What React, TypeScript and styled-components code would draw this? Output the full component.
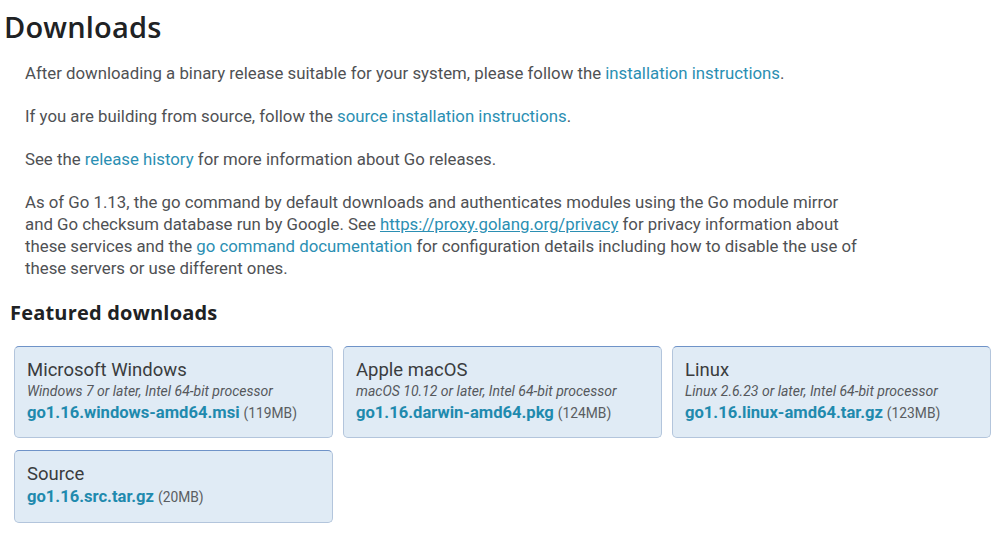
import React from 'react'
import styled, { createGlobalStyle } from 'styled-components'

const GlobalStyle = createGlobalStyle`
  body {
    margin: 0;
    background: #ffffff;
    font-family: Roboto, "Liberation Sans", Arial, sans-serif;
    color: #4a4c4f;
  }
`

type Download = {
  os: string
  info?: string
  file: string
  size: string
}

const downloads: Download[] = [
  { os: 'Microsoft Windows', info: 'Windows 7 or later, Intel 64-bit processor', file: 'go1.16.windows-amd64.msi', size: '119MB' },
  { os: 'Apple macOS', info: 'macOS 10.12 or later, Intel 64-bit processor', file: 'go1.16.darwin-amd64.pkg', size: '124MB' },
  { os: 'Linux', info: 'Linux 2.6.23 or later, Intel 64-bit processor', file: 'go1.16.linux-amd64.tar.gz', size: '123MB' },
  { os: 'Source', file: 'go1.16.src.tar.gz', size: '20MB' },
]

const App = (): JSX.Element => {
  return (
    <Page>
      <GlobalStyle />
      <Title>Downloads</Title>
      <Body>
        <Para>
          After downloading a binary release suitable for your system, please follow the{' '}
          <Link href="#">installation instructions</Link>.
        </Para>
        <Para>
          If you are building from source, follow the <Link href="#">source installation instructions</Link>.
        </Para>
        <Para>
          See the <Link href="#">release history</Link> for more information about Go releases.
        </Para>
        <Para>
          As of Go 1.13, the go command by default downloads and authenticates modules using the Go module mirror
          <br />
          and Go checksum database run by Google. See <Link href="#" $underline>https://proxy.golang.org/privacy</Link> for privacy information about
          <br />
          these services and the <Link href="#">go command documentation</Link> for configuration details including how to disable the use of
          <br />
          these servers or use different ones.
        </Para>
      </Body>
      <SubTitle>Featured downloads</SubTitle>
      <Grid>
        {downloads.map((d) => (
          <Card key={d.file} href="#" $compact={!d.info}>
            <Os>{d.os}</Os>
            {d.info && <Info>{d.info}</Info>}
            <FileRow>
              <FileName>{d.file}</FileName> <Size>({d.size})</Size>
            </FileRow>
          </Card>
        ))}
      </Grid>
    </Page>
  )
}

export default App

/* =================================================== */
const Page = styled.div`
  padding: 10px 0 0 4px;
  width: 1000px;
  box-sizing: border-box;
`

const Title = styled.h1`
  margin: 0;
  font-family: "Open Sans", Inter, sans-serif;
  font-weight: 600;
  font-size: 29px;
  line-height: 34px;
  color: #202224;
  letter-spacing: 0.2px;
`

const Body = styled.div`
  padding: 18px 0 0 21px;
  width: 900px;
`

const Para = styled.p`
  margin: 0 0 21px 0;
  font-size: 16.8px;
  line-height: 22px;
  color: #4f5154;
  white-space: nowrap;
`

const Link = styled.a<{ $underline?: boolean }>`
  color: #2b8fb3;
  text-decoration: ${(p) => (p.$underline ? 'underline' : 'none')};
`

const SubTitle = styled.h2`
  margin: 2px 0 0 6px;
  font-family: "Open Sans", Inter, sans-serif;
  font-weight: 700;
  font-size: 20px;
  line-height: 26px;
  color: #202224;
  letter-spacing: 0.2px;
`

const Grid = styled.div`
  display: grid;
  grid-template-columns: repeat(3, 319px);
  column-gap: 10px;
  row-gap: 12px;
  padding: 20px 0 0 10px;
`

const Card = styled.a<{ $compact?: boolean }>`
  display: flex;
  flex-direction: column;
  box-sizing: border-box;
  padding: ${(p) => (p.$compact ? '12px 12px 14px' : '12px 12px 13px')};
  background: #e0ebf5;
  border: 1px solid #b3c5dc;
  border-top-color: #6f93c8;
  border-radius: 5px;
  text-decoration: none;
`

const Os = styled.div`
  font-size: 18.5px;
  line-height: 22px;
  color: #3a3c3e;
`

const Info = styled.div`
  font-size: 14px;
  line-height: 20px;
  font-style: italic;
  color: #55585c;
`

const FileRow = styled.div`
  margin-top: 1px;
  line-height: 22px;
  white-space: nowrap;
`

const FileName = styled.span`
  font-size: 16.6px;
  font-weight: 700;
  color: #1f8aae;
`

const Size = styled.span`
  font-size: 13.8px;
  color: #5a5d61;
`
